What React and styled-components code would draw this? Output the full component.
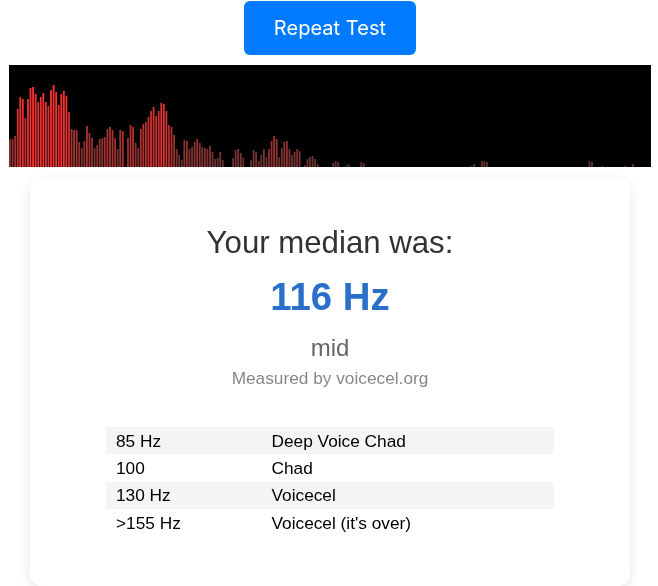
import React from "react";
import styled, { createGlobalStyle } from "styled-components";

const GlobalStyle = createGlobalStyle`
  html, body {
    margin: 0;
    padding: 0;
    background: #fff;
    overflow: hidden;
  }
`;

/** styled components */
const Page = styled.div`
  width: 660px;
  height: 586px;
  font-family: "Liberation Sans", Arial, sans-serif;
  overflow: hidden;
  will-change: transform;
`;

const Top = styled.div`
  display: flex;
  justify-content: center;
  padding-top: 1px;
`;

const Button = styled.button`
  width: 172px;
  height: 54px;
  border: none;
  border-radius: 6px;
  background-color: #007bff;
  color: white;
  font-family: Inter, sans-serif;
  font-size: 20px;
  letter-spacing: 0.04px;
  cursor: pointer;
`;

const Wave = styled.svg`
  display: block;
  width: 642px;
  height: 102px;
  margin: 10px auto 0;
  background: #000;
`;

const Bars = styled.g`
  filter: blur(0.35px);
`;

const Card = styled.div`
  width: 600px;
  height: 408px;
  box-sizing: border-box;
  margin: 11px auto 0;
  padding: 46px 76px 0;
  border-radius: 12px;
  background: #fff;
  box-shadow: 0 4px 12px rgba(0, 0, 0, 0.1);
  text-align: center;
`;

const Title = styled.div`
  font-size: 31.2px;
  line-height: 37px;
  color: #333;
`;

const Value = styled.div`
  margin-top: 14px;
  font-size: 38.4px;
  line-height: 44px;
  font-weight: bold;
  color: #2a6fc9;
`;

const Label = styled.div`
  margin-top: 15px;
  font-size: 24px;
  line-height: 28px;
  color: #666;
`;

const Note = styled.div`
  margin-top: 6px;
  font-size: 17.28px;
  line-height: 20px;
  color: #888;
`;

const Table = styled.div`
  margin-top: 39px;
  text-align: left;
`;

const Row = styled.div`
  display: grid;
  grid-template-columns: 155.5px 1fr;
  height: 27.3px;
  padding-left: 10px;
  padding-top: 1px;
  box-sizing: border-box;
  align-items: center;
  font-size: 17.28px;
  color: #000;
  background-color: ${(p) => (p.$shaded ? "#f4f4f4" : "transparent")};
`;

const BAR_PERIOD = 2.564;
const BAR_WIDTH = 1.8;

// bar heights read off the spectrum, low bins first
const head = [
  28, 28, 31, 58, 70, 68, 49, 68, 79, 80, 73, 65, 70, 74, 65, 61, 77, 82, 75,
  62, 73, 76, 71, 55, 38, 37, 37, 25, 19, 26, 41, 34, 29, 19, 22, 28, 29, 30,
  38, 40, 37, 29, 18, 37, 36, 0, 29, 42, 40, 24, 19, 38, 43, 45, 50, 56, 60,
  51, 56, 64, 63, 56, 42, 40, 32, 18, 12, 7, 27, 26, 18, 20, 25, 28, 24, 20,
  19, 18, 21, 15, 8, 9, 15, 7, 0, 0, 0, 9, 17, 18, 14, 9, 0, 0, 7, 17, 15, 6,
  12, 18, 10, 18, 26, 31, 28, 10, 19, 25, 26, 18, 12, 15, 18, 16, 0, 2, 8, 10,
  11, 8, 3,
];

const tail = {
  126: 4, 127: 6, 128: 5, 131: 1, 132: 3, 137: 5, 138: 4, 180: 1, 181: 3,
  184: 6, 185: 6, 186: 5, 226: 6, 227: 5, 231: 1, 240: 1, 243: 3,
};

const bars = head.map((h, i) => [i, h]).concat(
  Object.entries(tail).map(([i, h]) => [Number(i), h])
);

const barColor = (h) => `rgb(${Math.min(255, 85 + h * 2.2)}, 50, 50)`;

const Spectrum = () => (
  <Wave viewBox="0 0 642 102">
    <Bars>
      {bars.map(([i, h]) => (
        <rect
          key={i}
          x={0.1 + i * BAR_PERIOD}
          y={102 - h}
          width={BAR_WIDTH}
          height={h}
          fill={barColor(h)}
        />
      ))}
    </Bars>
  </Wave>
);

const RANGES = [
  ["85 Hz", "Deep Voice Chad"],
  ["100", "Chad"],
  ["130 Hz", "Voicecel"],
  [">155 Hz", "Voicecel (it's over)"],
];

/** App */
const App = () => (
  <Page>
    <GlobalStyle />
    <Top>
      <Button>Repeat Test</Button>
    </Top>
    <Spectrum />
    <Card>
      <Title>Your median was:</Title>
      <Value>116 Hz</Value>
      <Label>mid</Label>
      <Note>Measured by voicecel.org</Note>
      <Table>
        {RANGES.map(([hz, name], i) => (
          <Row key={hz} $shaded={i % 2 === 0}>
            <span>{hz}</span>
            <span>{name}</span>
          </Row>
        ))}
      </Table>
    </Card>
  </Page>
);

export default App;
